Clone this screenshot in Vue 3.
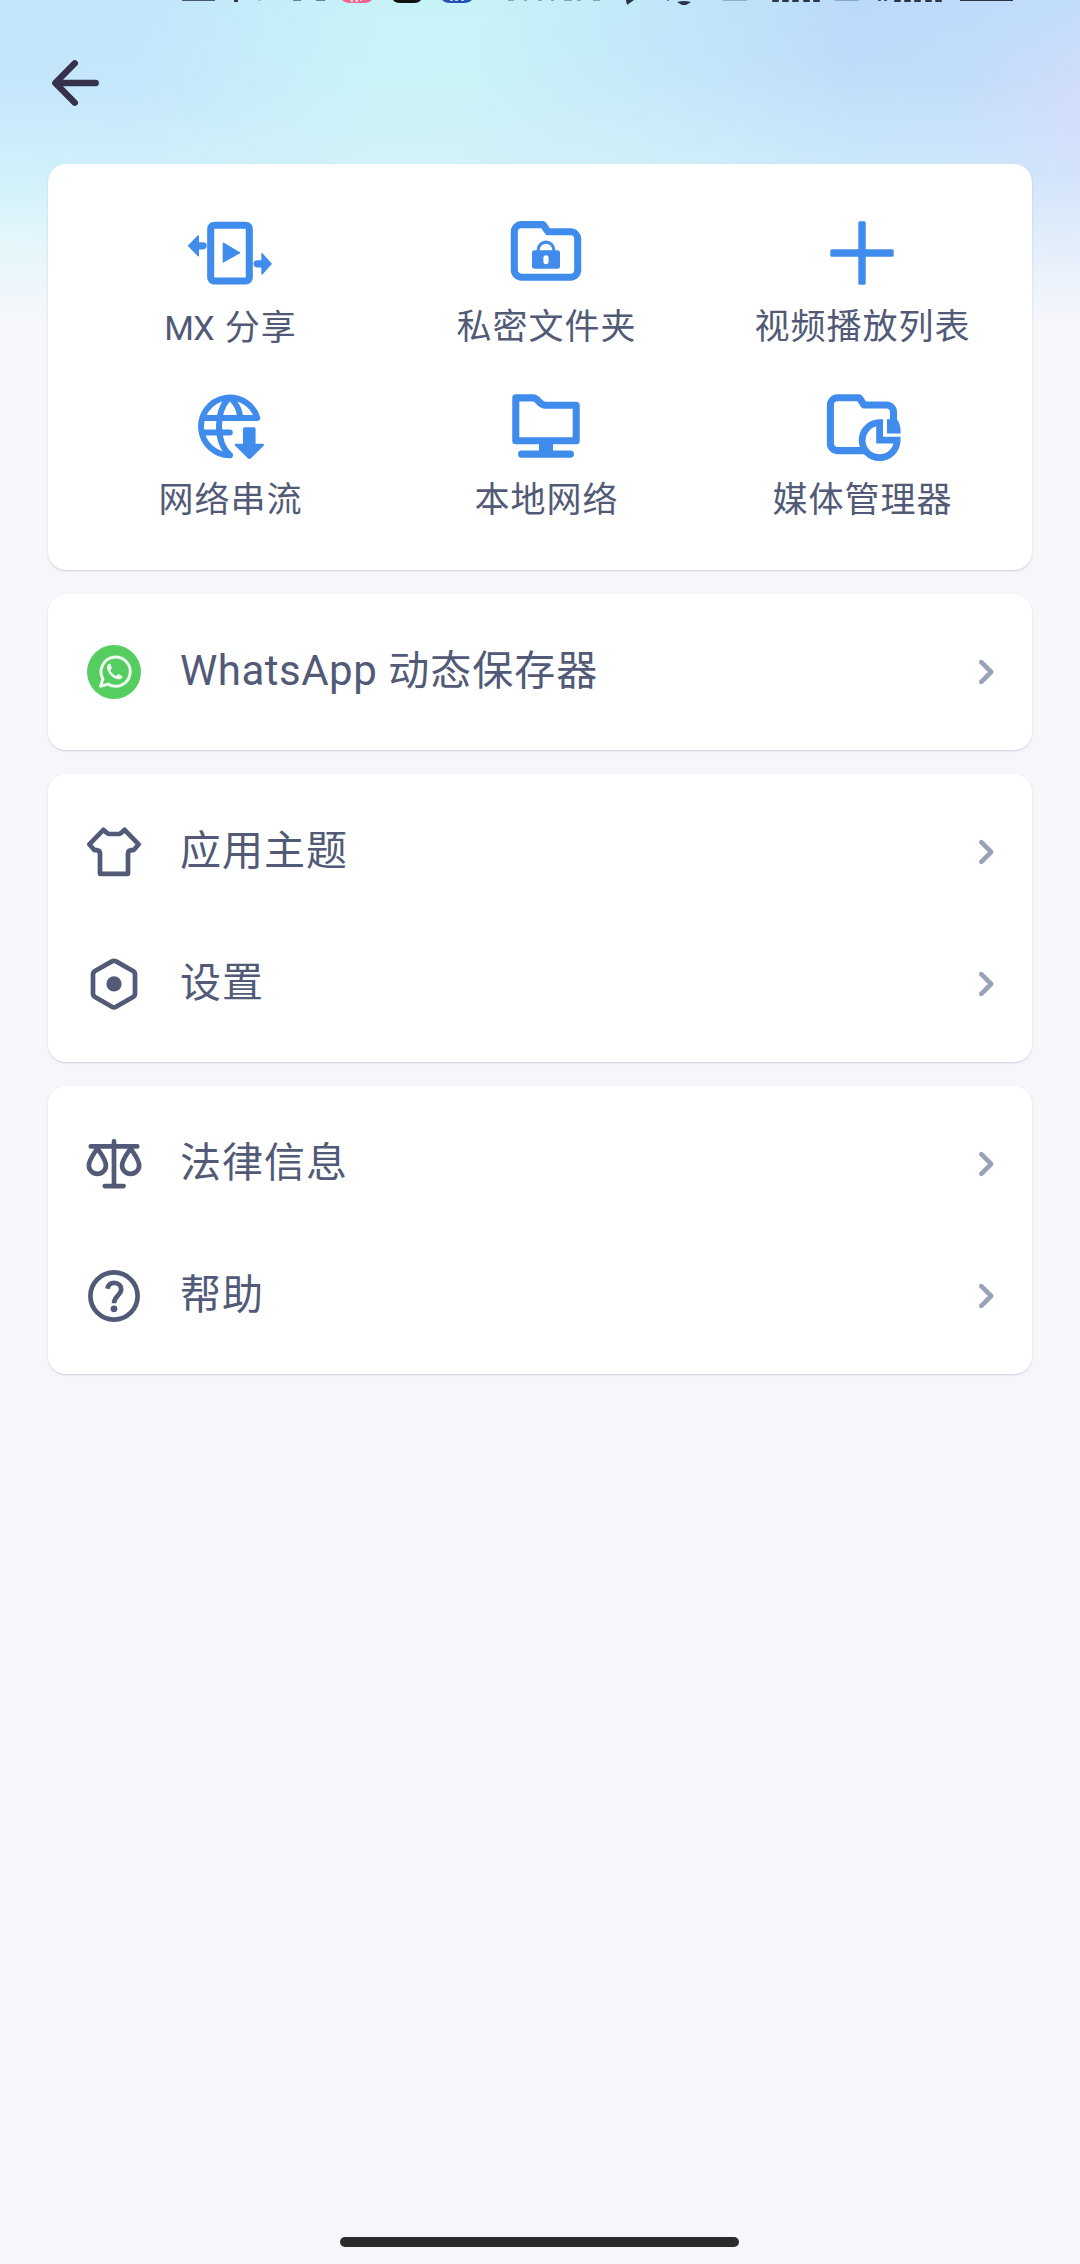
<script setup>
const tools = [
  { id: 'share', latin: 'MX', label: '分享' },
  { id: 'private', label: '私密文件夹' },
  { id: 'playlist', label: '视频播放列表' },
  { id: 'stream', label: '网络串流' },
  { id: 'local', label: '本地网络' },
  { id: 'media', label: '媒体管理器' },
]

const groups = [
  [{ id: 'whatsapp', latin: 'WhatsApp', label: '动态保存器' }],
  [{ id: 'theme', label: '应用主题' }, { id: 'settings', label: '设置' }],
  [{ id: 'legal', label: '法律信息' }, { id: 'help', label: '帮助' }],
]

const signalA = [772, 782, 792, 803, 813]
const signalB = [878, 884, 894, 904, 914, 925, 935]
</script>

<template>
  <div class="screen">
    <svg class="status" width="1080" height="8" viewBox="0 0 1080 8">
      <g fill="#2a3645">
        <rect x="182" y="0" width="33" height="1" opacity=".8" />
        <rect x="234" y="0" width="4" height="2" />
        <rect x="258" y="0" width="3" height="1" opacity=".25" />
        <rect x="293" y="0" width="8" height="1" opacity=".6" />
        <rect x="316" y="0" width="9" height="1" opacity=".6" />
        <g opacity=".4">
          <rect x="508" y="0" width="6" height="1" />
          <rect x="524" y="0" width="3" height="1" />
          <rect x="538" y="0" width="4" height="1" />
          <rect x="551" y="0" width="3" height="1" />
          <rect x="564" y="0" width="8" height="1" />
          <rect x="577" y="0" width="4" height="1" />
          <rect x="593" y="0" width="7" height="1" />
        </g>
        <path d="M626 0H634L627 5Z" />
        <rect x="667" y="0" width="2" height="1" opacity=".6" />
        <path d="M677 2Q684 0 691 2L686 5H682Z" />
        <rect x="723" y="0" width="24" height="1" opacity=".3" />
        <rect v-for="x in signalA" :key="x" :x="x" y="0" width="7" height="2" rx="1" />
        <rect x="835" y="0" width="24" height="1" opacity=".3" />
        <rect v-for="(x, i) in signalB" :key="x" :x="x" y="0" :width="i < 2 ? 3 : 7" :height="i < 2 ? 1 : 2" rx="1" />
        <rect x="960" y="0" width="53" height="1" />
      </g>
      <path d="M342 0H372Q369 3 364 3H350Q345 3 342 0Z" fill="#f3628f" />
      <path d="M350 0h3v2h-2zM355 0h3v2h-2zM360 0h2v1h-2z" fill="#fbd0df" />
      <path d="M393 0H421Q419 3 414 3H400Q395 3 393 0Z" fill="#111" />
      <path d="M442 0H472Q469 3 464 3H450Q445 3 442 0Z" fill="#2450b4" />
      <path d="M450 0h3v1h-3zM455 0h3v1h-3zM461 0h3v1h-3z" fill="#b5c8ee" />
    </svg>

    <header class="bar">
      <svg class="back" width="60" height="60" viewBox="0 0 60 60">
        <path d="M29.8 10.3L10.3 30L29.8 49.7M12 30H50.7" />
      </svg>
    </header>

    <main class="cards">
      <section class="card grid">
        <div v-for="t in tools" :key="t.id" class="tool">
          <svg class="blue" width="96" height="96" viewBox="0 0 96 96">
            <template v-if="t.id === 'share'">
              <rect class="line" x="28.7" y="20.2" width="38.6" height="55.8" rx="3.5" />
              <path d="M41.5 37.5Q40.7 37.4 40.7 38.4V57Q40.7 58 41.6 57.6L58 48.3Q58.6 47.8 58 47.2Z" />
              <path d="M5.7 40.7L15.6 30.5Q17 29.6 17 31.2V37.2H21.2Q24.7 37.4 24.7 40.8Q24.7 44.2 21.2 44.4H17V50.5Q17 52 15.6 51Z" />
              <path d="M90 58.8L80.7 48.5Q79.3 47.4 79.3 49V55.2H75Q71.4 55.5 71.4 58.8Q71.4 62.1 75 62.4H79.3V68.7Q79.3 70.4 80.7 69.2Z" />
            </template>
            <template v-else-if="t.id === 'private'">
              <path class="line" d="M23.5 19.6H45L50 26.8H72.5A7.2 7.2 0 0 1 79.7 34V65A7.2 7.2 0 0 1 72.5 72.2H23.5A7.2 7.2 0 0 1 16.3 65V26.8A7.2 7.2 0 0 1 23.5 19.6Z" />
              <path d="M40.2 46V45A7.8 7.8 0 0 1 55.8 45V46" fill="none" stroke="#408cec" stroke-width="3.2" />
              <path fill-rule="evenodd" d="M36.5 45.3H59.5Q62 45.3 62 47.8V61.2Q62 63.7 59.5 63.7H36.5Q34 63.7 34 61.2V47.8Q34 45.3 36.5 45.3ZM48 50.2Q45.4 50.2 45.4 52.8V56.6Q45.4 59.2 48 59.2Q50.6 59.2 50.6 56.6V52.8Q50.6 50.2 48 50.2Z" />
            </template>
            <template v-else-if="t.id === 'playlist'">
              <rect x="16.3" y="44.3" width="63.4" height="7.4" rx="1.5" />
              <rect x="44.3" y="16.3" width="7.4" height="63.4" rx="1.5" />
            </template>
            <template v-else-if="t.id === 'stream'">
              <g class="thin">
                <path d="M47.8 77.2A28.8 28.8 0 1 1 75.4 40H20.5M20.5 54.4H47.8" />
                <path d="M46 21C40.5 27 37 37 37 48C37 60 41 71 47.8 77M49.5 21C54.5 26 57.8 33 58.3 40" />
              </g>
              <path d="M62.6 49.3H72Q73.6 49.3 73.6 51V65.8H80.7Q82.8 66 81.6 67.8L69 80.3Q67.4 81.8 65.8 80.3L53.2 67.8Q52 66 54 65.8H61V51Q61 49.3 62.6 49.3Z" />
            </template>
            <template v-else-if="t.id === 'local'">
              <path class="line" d="M17.8 19.9H35C40.5 19.9 41 27.2 47.5 27.2H78.2V62.8H17.8Z" />
              <path d="M41 64H55V74H41Z" />
              <rect x="20" y="72.5" width="56" height="7.2" rx="3.6" />
            </template>
            <template v-else>
              <path class="line" d="M51.5 72.6H23.6A7.2 7.2 0 0 1 16.4 65.4V27A7.2 7.2 0 0 1 23.6 19.8H45.3L50 27H72.3A7.2 7.2 0 0 1 79.5 34.2V42" />
              <path class="line miter" d="M65.6 44.7V62.2H83.1A17.5 17.5 0 1 1 65.6 44.7Z" />
              <path d="M73 41.3H83Q86.7 46 86.7 55.4H73Z" />
            </template>
          </svg>
          <span class="caption"><span v-if="t.latin" class="latin">{{ t.latin }}</span>{{ t.label }}</span>
        </div>
      </section>

      <section v-for="(rows, g) in groups" :key="g" class="card list">
        <div v-for="r in rows" :key="r.id" class="row">
          <svg class="slate" width="72" height="72" viewBox="0 0 72 72">
            <template v-if="r.id === 'whatsapp'">
              <circle cx="36" cy="36" r="27" fill="#55cd61" stroke="none" />
              <path d="M22.6 50.2L24.9 42.8A14.6 14.6 0 1 1 30 48.1Z" stroke="#eefbee" stroke-width="3" />
              <path d="M31.4 27.6C29.4 28.3 28.6 30.6 29.2 33C30.6 38 35 42.3 39.7 43.3C42.3 43.7 44.4 42.3 44.6 40.2L40.4 37.9L38.3 40C35.4 38.9 33.4 36.8 32.3 34.2L33.9 32.2L32.5 28Q32.1 27.4 31.4 27.6Z" fill="#eefbee" stroke="none" />
            </template>
            <path v-else-if="r.id === 'theme'" d="M25.4 13.8L29.2 17.2Q30.2 18 31.5 18H40.5Q41.8 18 42.8 17.2L46.6 13.8L60.7 28.3L55.5 34.2H53.2Q50 34.6 50 38V57.8H22V38Q22 34.6 18.8 34.2H16.5L11.3 28.3Z" />
            <template v-else-if="r.id === 'settings'">
              <path d="M33.9 13.4Q36 12.3 38.1 13.4L55 23Q57 24.2 57 26.5V45.5Q57 47.8 55 49L38.1 58.8Q36 60 33.9 58.8L17 49Q15 47.8 15 45.5V26.5Q15 24.2 17 23Z" />
              <circle cx="36" cy="35.9" r="7.6" fill="#515a76" stroke="none" />
            </template>
            <template v-else-if="r.id === 'legal'">
              <path d="M36 13.4V58M12.8 18.4H59.2M26.8 58.1H45.6" />
              <path d="M19.4 20.5C15 27 10.9 31.8 10.9 37.4A8.5 8.5 0 0 0 27.9 37.4C27.9 31.8 23.8 27 19.4 20.5ZM52.6 20.5C48.2 27 44.1 31.8 44.1 37.4A8.5 8.5 0 0 0 61.1 37.4C61.1 31.8 57 27 52.6 20.5Z" />
            </template>
            <template v-else>
              <circle cx="36" cy="36" r="23.6" />
              <path class="butt" d="M29.3 28.8C30.3 24.6 33 22.9 36.2 22.9C40.2 22.9 43.2 25.8 43.2 29.5C43.2 35 36 36 36 43.2" />
              <circle cx="36" cy="48.8" r="3.4" fill="#515a76" stroke="none" />
            </template>
          </svg>
          <span class="label"><span v-if="r.latin" class="latin">{{ r.latin }}</span>{{ r.label }}</span>
          <svg class="chevron" width="24" height="32" viewBox="0 0 24 32">
            <path d="M6.3 6.2L16.2 16L6.3 25.8" />
          </svg>
        </div>
      </section>
    </main>

    <footer class="nav"><div class="pill"></div></footer>
  </div>
</template>

<style>
body {
  margin: 0;
  background: #f5f7fb;
}
</style>

<style scoped>
.screen {
  width: 1080px;
  height: 2264px;
  display: flex;
  flex-direction: column;
  overflow: hidden;
  color: #515a76;
  font-family: Roboto, "Noto Sans CJK SC", sans-serif;
  background:
    linear-gradient(180deg, rgba(245, 247, 251, 0) 0, rgba(245, 247, 251, .05) 80px, rgba(245, 247, 251, .2) 170px, rgba(245, 247, 251, .66) 250px, #f5f7fb 320px) 0 0 / 100% 320px no-repeat,
    radial-gradient(ellipse 170px 120px at 1130px 115px, rgba(216, 218, 250, .75), rgba(216, 218, 250, 0)) 0 0 / 100% 320px no-repeat,
    radial-gradient(ellipse 420px 170px at 0 250px, rgba(200, 246, 250, 1), rgba(200, 246, 250, 0)) 0 0 / 100% 320px no-repeat,
    radial-gradient(ellipse 560px 150px at 640px 200px, rgba(203, 239, 249, .8), rgba(203, 239, 249, 0)) 0 0 / 100% 320px no-repeat,
    linear-gradient(98deg, #c2e5fb 0, #c2e6fb 140px, #c7f3f8 390px, #c7f3f8 470px, #bbdafa 850px, #c3dcfb 1080px) 0 0 / 100% 320px no-repeat,
    #f5f7fb;
}
.status {
  display: block;
  flex: none;
}
.bar {
  flex: none;
  height: 156px;
  box-sizing: border-box;
  padding: 45px 0 0 45px;
}
.back {
  display: block;
  fill: none;
  stroke: #37314c;
  stroke-width: 6.4;
  stroke-linecap: round;
  stroke-linejoin: round;
}
.cards {
  flex: 1;
  display: flex;
  flex-direction: column;
  gap: 24px;
  padding: 0 48px;
}
.card {
  background: #fff;
  border-radius: 18px;
  box-shadow: 0 1px 2px rgba(40, 50, 70, .2);
}
.grid {
  display: grid;
  grid-template-columns: repeat(3, 316px);
  grid-auto-rows: 173px;
  height: 406px;
  box-sizing: border-box;
  padding: 41px 12px 0 24px;
}
.tool {
  display: flex;
  flex-direction: column;
  align-items: center;
}
.blue {
  display: block;
  fill: #408cec;
}
.line {
  fill: none;
  stroke: #408cec;
  stroke-width: 7.1;
  stroke-linejoin: round;
}
.miter {
  stroke-width: 6.8;
  stroke-linejoin: miter;
}
.thin {
  fill: none;
  stroke: #408cec;
  stroke-width: 6;
  stroke-linecap: round;
  stroke-linejoin: round;
}
.caption {
  margin: 3px 0 0 1px;
  font-size: 35px;
  line-height: 48px;
  letter-spacing: 1px;
  white-space: nowrap;
}
.caption .latin {
  margin-right: 11px;
  font-size: 34px;
  letter-spacing: -1px;
}
.list {
  padding: 12px 33px 12px 30px;
}
.row {
  height: 132px;
  display: flex;
  align-items: center;
}
.slate {
  flex: none;
  fill: none;
  stroke: #515a76;
  stroke-width: 4.7;
  stroke-linecap: round;
  stroke-linejoin: round;
}
.butt {
  stroke-linecap: butt;
}
.label {
  flex: 1;
  margin: 0 0 2px 30px;
  font-size: 41px;
  line-height: 60px;
  letter-spacing: 1px;
  white-space: nowrap;
}
.label .latin {
  margin-right: 11px;
  font-size: 42px;
  letter-spacing: .5px;
}
.chevron {
  flex: none;
  fill: none;
  stroke: #98a3b9;
  stroke-width: 4.6;
  stroke-linecap: round;
  stroke-linejoin: round;
}
.nav {
  flex: none;
  height: 27px;
  display: flex;
  justify-content: center;
}
.pill {
  width: 399px;
  height: 10px;
  margin-right: 1px;
  border-radius: 5px;
  background: #2b2b2e;
}
</style>
